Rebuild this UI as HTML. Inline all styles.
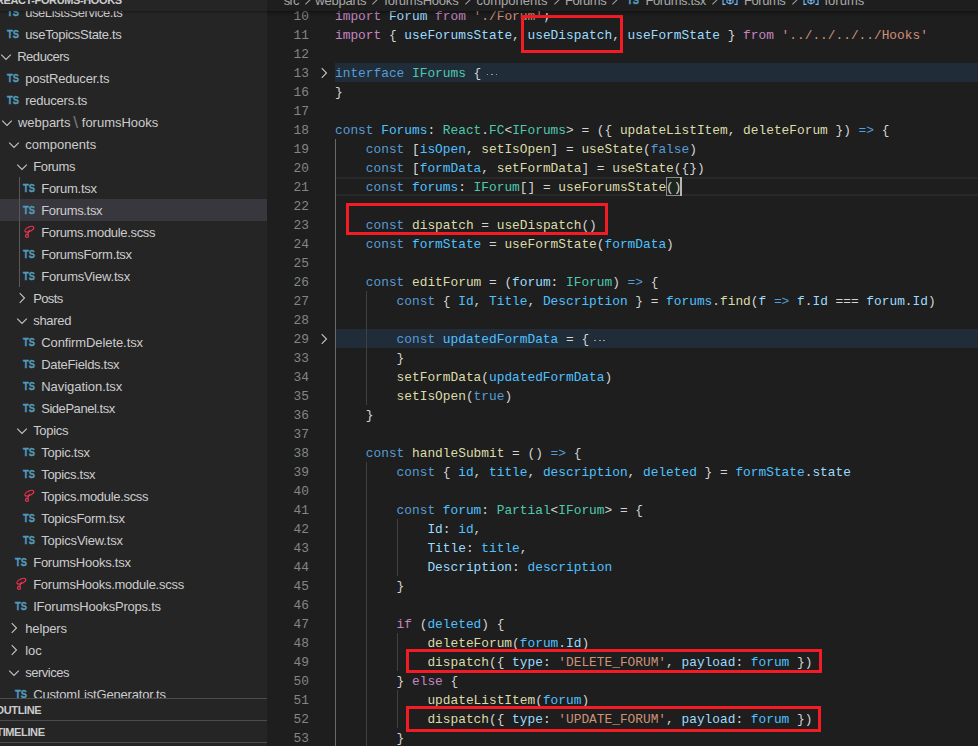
<!DOCTYPE html>
<html><head><meta charset="utf-8"><title>Forums.tsx</title>
<style>
html,body{margin:0;padding:0;background:#1e1e1e;}
body{width:978px;height:746px;overflow:hidden;position:relative;font-family:"Liberation Sans",sans-serif;}
#sidebar{position:absolute;left:0;top:0;width:267px;height:746px;background:#252526;overflow:hidden;}
.row{position:absolute;left:0;width:267px;height:22px;line-height:22px;font-size:13px;color:#cccccc;white-space:nowrap;}
.row.sel{background:#37373d;}
.lbl{position:absolute;top:1px;}
.sep{opacity:.5;transform:scale(1.35,1.3);transform-origin:50% 55%;}
.ts{position:absolute;top:0px;font-size:10.8px;font-weight:bold;color:#519aba;-webkit-text-stroke:0.35px #519aba;transform:scaleX(.87);transform-origin:0 50%;display:inline-block;}
.chev,.scss{display:block}
#sbhead{position:absolute;left:0;top:0;width:267px;height:11px;background:#252526;overflow:hidden;}
#sbshadow{position:absolute;left:0;top:11px;width:267px;height:4px;background:linear-gradient(rgba(0,0,0,.30),rgba(0,0,0,.14) 35%,rgba(0,0,0,.04) 70%,rgba(0,0,0,0));}
#sbhead span{position:absolute;left:-4.1px;top:-7px;font-size:11px;font-weight:bold;color:#cccccc;line-height:14px;white-space:nowrap;letter-spacing:-0.38px;}
.pane{position:absolute;left:0;width:267px;height:21px;background:#252526;border-top:1px solid #4d4d4d;}
.pane span{position:absolute;top:0;line-height:22px;font-size:11px;font-weight:bold;color:#cccccc;letter-spacing:-0.38px;white-space:nowrap;}
#sbguide{position:absolute;left:19px;top:177px;width:1px;height:110px;background:#585858;}
#editor{position:absolute;left:267px;top:0;width:711px;height:746px;background:#1e1e1e;}
.ln{position:absolute;left:267px;width:42px;height:19px;line-height:19px;padding-top:1px;text-align:right;color:#858585;font-family:"Liberation Mono",monospace;font-size:12.83px;}
.cl{position:absolute;left:335px;height:19px;line-height:19px;padding-top:1px;white-space:pre;color:#d4d4d4;font-family:"Liberation Mono",monospace;font-size:12.83px;}
.k{color:#569cd6}.c{color:#c586c0}.v{color:#9cdcfe}.n{color:#4fc1ff}.f{color:#dcdcaa}.t{color:#4ec9b0}.s{color:#ce9178}.p{color:#d4d4d4}
.d{display:inline-block;position:relative;width:17px;height:19px;vertical-align:top}
.d i{position:absolute;top:9.5px;width:1.6px;height:1.6px;background:#9a9a9a;}
.foldbg{position:absolute;left:335px;width:643px;height:19px;background:#212c39;}
.curline{position:absolute;left:335px;width:643px;height:15px;border-top:2px solid #282828;border-bottom:2px solid #282828;}
.bm{position:absolute;left:666px;width:14px;height:17px;border:1px solid #8a8a8a;background:#1d261c;}
.cursor{position:absolute;left:680px;width:2px;height:19px;background:#b4b4b2;}
.guide{position:absolute;width:1px;background:#404040;}
.red{position:absolute;border:3px solid #f41c24;}
#bc{position:absolute;left:267px;top:0;width:711px;height:11px;background:#1e1e1e;overflow:hidden;}
#edshadow{position:absolute;left:267px;top:11px;width:711px;height:6px;background:linear-gradient(rgba(0,0,0,.42),rgba(0,0,0,.26) 20%,rgba(0,0,0,.14) 45%,rgba(0,0,0,.05) 75%,rgba(0,0,0,0));}
#bc span{position:absolute;top:-6px;line-height:14px;font-size:13px;color:#a9a9a9;white-space:nowrap;}
#bc span.ts{color:#519aba;font-size:10.8px}
</style></head><body>
<div id="editor"></div>
<div class="foldbg" style="top:63px"></div><div class="curline" style="top:177px"></div><div class="bm" style="top:177px"></div><div class="cursor" style="top:177px"></div><div class="foldbg" style="top:329px"></div>
<div class="guide" style="left:335.0px;top:139px;height:608px;background:#6a6a6a"></div>
<div class="guide" style="left:365.8px;top:291px;height:114px;background:#404040"></div>
<div class="guide" style="left:365.8px;top:462px;height:285px;background:#404040"></div>
<div class="guide" style="left:396.6px;top:519px;height:57px;background:#404040"></div>
<div class="guide" style="left:396.6px;top:633px;height:38px;background:#404040"></div>
<div class="guide" style="left:396.6px;top:690px;height:38px;background:#404040"></div>
<div class="ln" style="top:6px">10</div><div class="cl" style="top:6px"><span class="c">import</span><span class="p"> </span><span class="v">Forum</span><span class="p"> </span><span class="c">from</span><span class="p"> </span><span class="s">&#x27;./Forum&#x27;</span><span class="p">;</span></div>
<div class="ln" style="top:25px">11</div><div class="cl" style="top:25px"><span class="c">import</span><span class="p"> { </span><span class="v">useForumsState</span><span class="p">, </span><span class="v">useDispatch</span><span class="p">, </span><span class="v">useFormState</span><span class="p"> } </span><span class="c">from</span><span class="p"> </span><span class="s">&#x27;../../../../Hooks&#x27;</span></div>
<div class="ln" style="top:44px">12</div><div class="cl" style="top:44px"></div>
<span style="position:absolute;left:316px;top:65px"><svg class="chev" width="16" height="16" viewBox="0 0 16 16"><path d="M5.7 3.2 L10.5 8 L5.7 12.8" fill="none" stroke="#c5c5c5" stroke-width="1.1"/></svg></span><div class="ln" style="top:63px">13</div><div class="cl" style="top:63px"><span class="k">interface</span><span class="p"> </span><span class="t">IForums</span><span class="p"> {</span><span class="d"><i style="left:5.4px"></i><i style="left:9.9px"></i><i style="left:14.4px"></i></span></div>
<div class="ln" style="top:82px">16</div><div class="cl" style="top:82px"><span class="p">}</span></div>
<div class="ln" style="top:101px">17</div><div class="cl" style="top:101px"></div>
<div class="ln" style="top:120px">18</div><div class="cl" style="top:120px"><span class="k">const</span><span class="p"> </span><span class="n">Forums</span><span class="p">: </span><span class="t">React</span><span class="p">.</span><span class="t">FC</span><span class="p">&lt;</span><span class="t">IForums</span><span class="p">&gt; = ({ </span><span class="f">updateListItem</span><span class="p">, </span><span class="f">deleteForum</span><span class="p"> }) </span><span class="k">=&gt;</span><span class="p"> {</span></div>
<div class="ln" style="top:139px">19</div><div class="cl" style="top:139px"><span class="p">    </span><span class="k">const</span><span class="p"> [</span><span class="n">isOpen</span><span class="p">, </span><span class="f">setIsOpen</span><span class="p">] = </span><span class="f">useState</span><span class="p">(</span><span class="k">false</span><span class="p">)</span></div>
<div class="ln" style="top:158px">20</div><div class="cl" style="top:158px"><span class="p">    </span><span class="k">const</span><span class="p"> [</span><span class="n">formData</span><span class="p">, </span><span class="f">setFormData</span><span class="p">] = </span><span class="f">useState</span><span class="p">({})</span></div>
<div class="ln" style="top:177px">21</div><div class="cl" style="top:177px"><span class="p">    </span><span class="k">const</span><span class="p"> </span><span class="n">forums</span><span class="p">: </span><span class="t">IForum</span><span class="p">[] = </span><span class="f">useForumsState</span><span class="p">()</span></div>
<div class="ln" style="top:196px">22</div><div class="cl" style="top:196px"></div>
<div class="ln" style="top:215px">23</div><div class="cl" style="top:215px"><span class="p">    </span><span class="k">const</span><span class="p"> </span><span class="f">dispatch</span><span class="p"> = </span><span class="f">useDispatch</span><span class="p">()</span></div>
<div class="ln" style="top:234px">24</div><div class="cl" style="top:234px"><span class="p">    </span><span class="k">const</span><span class="p"> </span><span class="n">formState</span><span class="p"> = </span><span class="f">useFormState</span><span class="p">(</span><span class="n">formData</span><span class="p">)</span></div>
<div class="ln" style="top:253px">25</div><div class="cl" style="top:253px"></div>
<div class="ln" style="top:272px">26</div><div class="cl" style="top:272px"><span class="p">    </span><span class="k">const</span><span class="p"> </span><span class="f">editForum</span><span class="p"> = (</span><span class="v">forum</span><span class="p">: </span><span class="t">IForum</span><span class="p">) </span><span class="k">=&gt;</span><span class="p"> {</span></div>
<div class="ln" style="top:291px">27</div><div class="cl" style="top:291px"><span class="p">        </span><span class="k">const</span><span class="p"> { </span><span class="n">Id</span><span class="p">, </span><span class="n">Title</span><span class="p">, </span><span class="n">Description</span><span class="p"> } = </span><span class="n">forums</span><span class="p">.</span><span class="f">find</span><span class="p">(</span><span class="v">f</span><span class="p"> </span><span class="k">=&gt;</span><span class="p"> </span><span class="v">f</span><span class="p">.</span><span class="v">Id</span><span class="p"> === </span><span class="v">forum</span><span class="p">.</span><span class="v">Id</span><span class="p">)</span></div>
<div class="ln" style="top:310px">28</div><div class="cl" style="top:310px"></div>
<span style="position:absolute;left:316px;top:331px"><svg class="chev" width="16" height="16" viewBox="0 0 16 16"><path d="M5.7 3.2 L10.5 8 L5.7 12.8" fill="none" stroke="#c5c5c5" stroke-width="1.1"/></svg></span><div class="ln" style="top:329px">29</div><div class="cl" style="top:329px"><span class="p">        </span><span class="k">const</span><span class="p"> </span><span class="n">updatedFormData</span><span class="p"> = {</span><span class="d"><i style="left:5.4px"></i><i style="left:9.9px"></i><i style="left:14.4px"></i></span></div>
<div class="ln" style="top:348px">33</div><div class="cl" style="top:348px"><span class="p">        </span><span class="p">}</span></div>
<div class="ln" style="top:367px">34</div><div class="cl" style="top:367px"><span class="p">        </span><span class="f">setFormData</span><span class="p">(</span><span class="n">updatedFormData</span><span class="p">)</span></div>
<div class="ln" style="top:386px">35</div><div class="cl" style="top:386px"><span class="p">        </span><span class="f">setIsOpen</span><span class="p">(</span><span class="k">true</span><span class="p">)</span></div>
<div class="ln" style="top:405px">36</div><div class="cl" style="top:405px"><span class="p">    </span><span class="p">}</span></div>
<div class="ln" style="top:424px">37</div><div class="cl" style="top:424px"></div>
<div class="ln" style="top:443px">38</div><div class="cl" style="top:443px"><span class="p">    </span><span class="k">const</span><span class="p"> </span><span class="f">handleSubmit</span><span class="p"> = () </span><span class="k">=&gt;</span><span class="p"> {</span></div>
<div class="ln" style="top:462px">39</div><div class="cl" style="top:462px"><span class="p">        </span><span class="k">const</span><span class="p"> { </span><span class="n">id</span><span class="p">, </span><span class="n">title</span><span class="p">, </span><span class="n">description</span><span class="p">, </span><span class="n">deleted</span><span class="p"> } = </span><span class="n">formState</span><span class="p">.</span><span class="v">state</span></div>
<div class="ln" style="top:481px">40</div><div class="cl" style="top:481px"></div>
<div class="ln" style="top:500px">41</div><div class="cl" style="top:500px"><span class="p">        </span><span class="k">const</span><span class="p"> </span><span class="n">forum</span><span class="p">: </span><span class="t">Partial</span><span class="p">&lt;</span><span class="t">IForum</span><span class="p">&gt; = {</span></div>
<div class="ln" style="top:519px">42</div><div class="cl" style="top:519px"><span class="p">            </span><span class="v">Id</span><span class="p">: </span><span class="n">id</span><span class="p">,</span></div>
<div class="ln" style="top:538px">43</div><div class="cl" style="top:538px"><span class="p">            </span><span class="v">Title</span><span class="p">: </span><span class="n">title</span><span class="p">,</span></div>
<div class="ln" style="top:557px">44</div><div class="cl" style="top:557px"><span class="p">            </span><span class="v">Description</span><span class="p">: </span><span class="n">description</span></div>
<div class="ln" style="top:576px">45</div><div class="cl" style="top:576px"><span class="p">        </span><span class="p">}</span></div>
<div class="ln" style="top:595px">46</div><div class="cl" style="top:595px"></div>
<div class="ln" style="top:614px">47</div><div class="cl" style="top:614px"><span class="p">        </span><span class="c">if</span><span class="p"> (</span><span class="n">deleted</span><span class="p">) {</span></div>
<div class="ln" style="top:633px">48</div><div class="cl" style="top:633px"><span class="p">            </span><span class="f">deleteForum</span><span class="p">(</span><span class="n">forum</span><span class="p">.</span><span class="v">Id</span><span class="p">)</span></div>
<div class="ln" style="top:652px">49</div><div class="cl" style="top:652px"><span class="p">            </span><span class="f">dispatch</span><span class="p">({ </span><span class="v">type</span><span class="p">: </span><span class="s">&#x27;DELETE_FORUM&#x27;</span><span class="p">, </span><span class="v">payload</span><span class="p">: </span><span class="n">forum</span><span class="p"> })</span></div>
<div class="ln" style="top:671px">50</div><div class="cl" style="top:671px"><span class="p">        </span><span class="p">} </span><span class="c">else</span><span class="p"> {</span></div>
<div class="ln" style="top:690px">51</div><div class="cl" style="top:690px"><span class="p">            </span><span class="f">updateListItem</span><span class="p">(</span><span class="n">forum</span><span class="p">)</span></div>
<div class="ln" style="top:709px">52</div><div class="cl" style="top:709px"><span class="p">            </span><span class="f">dispatch</span><span class="p">({ </span><span class="v">type</span><span class="p">: </span><span class="s">&#x27;UPDATE_FORUM&#x27;</span><span class="p">, </span><span class="v">payload</span><span class="p">: </span><span class="n">forum</span><span class="p"> })</span></div>
<div class="ln" style="top:728px">53</div><div class="cl" style="top:728px"><span class="p">        </span><span class="p">}</span></div>
<div class="red" style="left:521px;top:15px;width:96px;height:32px"></div><div class="red" style="left:346px;top:203px;width:256px;height:26px"></div><div class="red" style="left:406px;top:649px;width:410px;height:18px"></div><div class="red" style="left:406px;top:706px;width:409px;height:20px"></div>
<div id="bc"><span style="left:16.80000000000001px;letter-spacing:-0.8px;">src</span><svg width="8" height="14" viewBox="0 0 8 14" style="position:absolute;left:36.60000000000002px;top:0"><path d="M1.4 -5.6 L6.4 -0.6 L1.4 4.4" fill="none" stroke="#a0a0a0" stroke-width="1.1"/></svg><span style="left:48.30000000000001px;letter-spacing:-0.206px;">webparts</span><svg width="8" height="14" viewBox="0 0 8 14" style="position:absolute;left:104.30000000000001px;top:0"><path d="M1.4 -5.6 L6.4 -0.6 L1.4 4.4" fill="none" stroke="#a0a0a0" stroke-width="1.1"/></svg><span style="left:117.30000000000001px;letter-spacing:-0.225px;">forumsHooks</span><svg width="8" height="14" viewBox="0 0 8 14" style="position:absolute;left:197.3px;top:0"><path d="M1.4 -5.6 L6.4 -0.6 L1.4 4.4" fill="none" stroke="#a0a0a0" stroke-width="1.1"/></svg><span style="left:209.39999999999998px;letter-spacing:0.027px;">components</span><svg width="8" height="14" viewBox="0 0 8 14" style="position:absolute;left:285.9px;top:0"><path d="M1.4 -5.6 L6.4 -0.6 L1.4 4.4" fill="none" stroke="#a0a0a0" stroke-width="1.1"/></svg><span style="left:297.9px;letter-spacing:-0.444px;">Forums</span><svg width="8" height="14" viewBox="0 0 8 14" style="position:absolute;left:344.29999999999995px;top:0"><path d="M1.4 -5.6 L6.4 -0.6 L1.4 4.4" fill="none" stroke="#a0a0a0" stroke-width="1.1"/></svg><span class="ts" style="left:359.70000000000005px;top:-7.5px;line-height:14px">TS</span><span style="left:378.4px;letter-spacing:-0.37px;">Forums.tsx</span><svg width="8" height="14" viewBox="0 0 8 14" style="position:absolute;left:443.70000000000005px;top:0"><path d="M1.4 -5.6 L6.4 -0.6 L1.4 4.4" fill="none" stroke="#a0a0a0" stroke-width="1.1"/></svg><svg width="16" height="14" viewBox="0 0 16 14" style="position:absolute;left:455px;top:0"><path d="M3.6 -6 H1 V4.4 H3.6 M12.4 -6 H15 V4.4 H12.4 M5 -1 L8 0.6 L11 -1 M5 -1 V2.4 L8 4 L11 2.4 V-1 M8 0.6 V4" fill="none" stroke="#75beff" stroke-width="1.1"/></svg><span style="left:477px;letter-spacing:-0.444px;">Forums</span><svg width="8" height="14" viewBox="0 0 8 14" style="position:absolute;left:524.2px;top:0"><path d="M1.4 -5.6 L6.4 -0.6 L1.4 4.4" fill="none" stroke="#a0a0a0" stroke-width="1.1"/></svg><svg width="16" height="14" viewBox="0 0 16 14" style="position:absolute;left:535.5px;top:0"><path d="M3.6 -6 H1 V4.4 H3.6 M12.4 -6 H15 V4.4 H12.4 M5 -1 L8 0.6 L11 -1 M5 -1 V2.4 L8 4 L11 2.4 V-1 M8 0.6 V4" fill="none" stroke="#75beff" stroke-width="1.1"/></svg><span style="left:557.5px;letter-spacing:-0.006px;">forums</span></div><div id="edshadow"></div>
<div id="sidebar">
<div class="row" style="top:1px"><span class="ts" style="left:7.399999999999999px">TS</span><span class="lbl" style="left:25.2px;letter-spacing:-0.426px">useListsService.ts</span></div>
<div class="row" style="top:23px"><span class="ts" style="left:7.399999999999999px">TS</span><span class="lbl" style="left:25.2px;letter-spacing:-0.329px">useTopicsState.ts</span></div>
<div class="row" style="top:45px"><span style="position:absolute;left:-2.0px;top:3.8px"><svg class="chev" width="16" height="16" viewBox="0 0 16 16"><path d="M3.2 5.6 L8 10.4 L12.8 5.6" fill="none" stroke="#c5c5c5" stroke-width="1.1"/></svg></span><span class="lbl" style="left:17.2px;letter-spacing:-0.468px">Reducers</span></div>
<div class="row" style="top:67px"><span class="ts" style="left:7.399999999999999px">TS</span><span class="lbl" style="left:25.2px;letter-spacing:-0.187px">postReducer.ts</span></div>
<div class="row" style="top:89px"><span class="ts" style="left:7.399999999999999px">TS</span><span class="lbl" style="left:25.2px;letter-spacing:-0.219px">reducers.ts</span></div>
<div class="row" style="top:111px"><span style="position:absolute;left:-1.0px;top:3.8px"><svg class="chev" width="16" height="16" viewBox="0 0 16 16"><path d="M3.2 5.6 L8 10.4 L12.8 5.6" fill="none" stroke="#c5c5c5" stroke-width="1.1"/></svg></span><span class="lbl" style="left:18px;letter-spacing:-0.044px">webparts</span><span class="lbl sep" style="left:74.3px">\</span><span class="lbl" style="left:81.8px;letter-spacing:-0.016px">forumsHooks</span></div>
<div class="row" style="top:133px"><span style="position:absolute;left:6.0px;top:3.8px"><svg class="chev" width="16" height="16" viewBox="0 0 16 16"><path d="M3.2 5.6 L8 10.4 L12.8 5.6" fill="none" stroke="#c5c5c5" stroke-width="1.1"/></svg></span><span class="lbl" style="left:25.2px;letter-spacing:0.027px">components</span></div>
<div class="row" style="top:155px"><span style="position:absolute;left:14.0px;top:3.8px"><svg class="chev" width="16" height="16" viewBox="0 0 16 16"><path d="M3.2 5.6 L8 10.4 L12.8 5.6" fill="none" stroke="#c5c5c5" stroke-width="1.1"/></svg></span><span class="lbl" style="left:33.2px;letter-spacing:-0.36px">Forums</span></div>
<div class="row" style="top:177px"><span class="ts" style="left:23.4px">TS</span><span class="lbl" style="left:41.2px;letter-spacing:-0.244px">Forum.tsx</span></div>
<div class="row sel" style="top:199px"><span class="ts" style="left:23.4px">TS</span><span class="lbl" style="left:41.2px;letter-spacing:-0.32px">Forums.tsx</span></div>
<div class="row" style="top:221px"><span style="position:absolute;left:23px;top:3px"><svg class="scss" width="16" height="16" viewBox="0 0 16 16"><g fill="none" stroke="#f0334f" stroke-width="1.2" stroke-linecap="round"><ellipse cx="6.3" cy="5.25" rx="4.75" ry="2.15" transform="rotate(-25 6.3 5.25)"/><path d="M6.3 6 C6.2 7.4 5.4 8.8 4.6 10.3"/><circle cx="4" cy="11.95" r="1.5"/></g></svg></span><span class="lbl" style="left:41.2px;letter-spacing:-0.329px">Forums.module.scss</span></div>
<div class="row" style="top:243px"><span class="ts" style="left:23.4px">TS</span><span class="lbl" style="left:41.2px;letter-spacing:-0.295px">ForumsForm.tsx</span></div>
<div class="row" style="top:265px"><span class="ts" style="left:23.4px">TS</span><span class="lbl" style="left:41.2px;letter-spacing:-0.194px">ForumsView.tsx</span></div>
<div class="row" style="top:287px"><span style="position:absolute;left:13.899999999999999px;top:3.2px"><svg class="chev" width="16" height="16" viewBox="0 0 16 16"><path d="M5.7 3.2 L10.5 8 L5.7 12.8" fill="none" stroke="#c5c5c5" stroke-width="1.1"/></svg></span><span class="lbl" style="left:33.2px;letter-spacing:-0.623px">Posts</span></div>
<div class="row" style="top:309px"><span style="position:absolute;left:14.0px;top:3.8px"><svg class="chev" width="16" height="16" viewBox="0 0 16 16"><path d="M3.2 5.6 L8 10.4 L12.8 5.6" fill="none" stroke="#c5c5c5" stroke-width="1.1"/></svg></span><span class="lbl" style="left:33.2px;letter-spacing:-0.308px">shared</span></div>
<div class="row" style="top:331px"><span class="ts" style="left:23.4px">TS</span><span class="lbl" style="left:41.2px;letter-spacing:-0.089px">ConfirmDelete.tsx</span></div>
<div class="row" style="top:353px"><span class="ts" style="left:23.4px">TS</span><span class="lbl" style="left:41.2px;letter-spacing:-0.305px">DateFields.tsx</span></div>
<div class="row" style="top:375px"><span class="ts" style="left:23.4px">TS</span><span class="lbl" style="left:41.2px;letter-spacing:-0.04px">Navigation.tsx</span></div>
<div class="row" style="top:397px"><span class="ts" style="left:23.4px">TS</span><span class="lbl" style="left:41.2px;letter-spacing:-0.454px">SidePanel.tsx</span></div>
<div class="row" style="top:419px"><span style="position:absolute;left:14.0px;top:3.8px"><svg class="chev" width="16" height="16" viewBox="0 0 16 16"><path d="M3.2 5.6 L8 10.4 L12.8 5.6" fill="none" stroke="#c5c5c5" stroke-width="1.1"/></svg></span><span class="lbl" style="left:33.2px;letter-spacing:-0.327px">Topics</span></div>
<div class="row" style="top:441px"><span class="ts" style="left:23.4px">TS</span><span class="lbl" style="left:41.2px;letter-spacing:-0.22px">Topic.tsx</span></div>
<div class="row" style="top:463px"><span class="ts" style="left:23.4px">TS</span><span class="lbl" style="left:41.2px;letter-spacing:-0.298px">Topics.tsx</span></div>
<div class="row" style="top:485px"><span style="position:absolute;left:23px;top:3px"><svg class="scss" width="16" height="16" viewBox="0 0 16 16"><g fill="none" stroke="#f0334f" stroke-width="1.2" stroke-linecap="round"><ellipse cx="6.3" cy="5.25" rx="4.75" ry="2.15" transform="rotate(-25 6.3 5.25)"/><path d="M6.3 6 C6.2 7.4 5.4 8.8 4.6 10.3"/><circle cx="4" cy="11.95" r="1.5"/></g></svg></span><span class="lbl" style="left:41.2px;letter-spacing:-0.318px">Topics.module.scss</span></div>
<div class="row" style="top:507px"><span class="ts" style="left:23.4px">TS</span><span class="lbl" style="left:41.2px;letter-spacing:-0.272px">TopicsForm.tsx</span></div>
<div class="row" style="top:529px"><span class="ts" style="left:23.4px">TS</span><span class="lbl" style="left:41.2px;letter-spacing:-0.193px">TopicsView.tsx</span></div>
<div class="row" style="top:551px"><span class="ts" style="left:15.399999999999999px">TS</span><span class="lbl" style="left:33.2px;letter-spacing:-0.243px">ForumsHooks.tsx</span></div>
<div class="row" style="top:573px"><span style="position:absolute;left:15px;top:3px"><svg class="scss" width="16" height="16" viewBox="0 0 16 16"><g fill="none" stroke="#f0334f" stroke-width="1.2" stroke-linecap="round"><ellipse cx="6.3" cy="5.25" rx="4.75" ry="2.15" transform="rotate(-25 6.3 5.25)"/><path d="M6.3 6 C6.2 7.4 5.4 8.8 4.6 10.3"/><circle cx="4" cy="11.95" r="1.5"/></g></svg></span><span class="lbl" style="left:33.2px;letter-spacing:-0.264px">ForumsHooks.module.scss</span></div>
<div class="row" style="top:595px"><span class="ts" style="left:15.399999999999999px">TS</span><span class="lbl" style="left:33.2px;letter-spacing:-0.225px">IForumsHooksProps.ts</span></div>
<div class="row" style="top:617px"><span style="position:absolute;left:5.899999999999999px;top:3.2px"><svg class="chev" width="16" height="16" viewBox="0 0 16 16"><path d="M5.7 3.2 L10.5 8 L5.7 12.8" fill="none" stroke="#c5c5c5" stroke-width="1.1"/></svg></span><span class="lbl" style="left:25.2px;letter-spacing:-0.134px">helpers</span></div>
<div class="row" style="top:639px"><span style="position:absolute;left:5.899999999999999px;top:3.2px"><svg class="chev" width="16" height="16" viewBox="0 0 16 16"><path d="M5.7 3.2 L10.5 8 L5.7 12.8" fill="none" stroke="#c5c5c5" stroke-width="1.1"/></svg></span><span class="lbl" style="left:25.2px;letter-spacing:0.025px">loc</span></div>
<div class="row" style="top:661px"><span style="position:absolute;left:6.0px;top:3.8px"><svg class="chev" width="16" height="16" viewBox="0 0 16 16"><path d="M3.2 5.6 L8 10.4 L12.8 5.6" fill="none" stroke="#c5c5c5" stroke-width="1.1"/></svg></span><span class="lbl" style="left:25.2px;letter-spacing:-0.473px">services</span></div>
<div class="row" style="top:683px"><span class="ts" style="left:15.399999999999999px">TS</span><span class="lbl" style="left:33.2px;letter-spacing:-0.176px">CustomListGenerator.ts</span></div>
<div id="sbguide"></div>
<div id="sbhead"><span>REACT-FORUMS-HOOKS</span></div><div id="sbshadow"></div>
<div class="pane" style="top:698px"><span style="left:-4.4px">OUTLINE</span></div>
<div class="pane" style="top:720px"><span style="left:-3.7px">TIMELINE</span></div>
<div class="pane" style="top:742px"></div>
</div>
</body></html>
